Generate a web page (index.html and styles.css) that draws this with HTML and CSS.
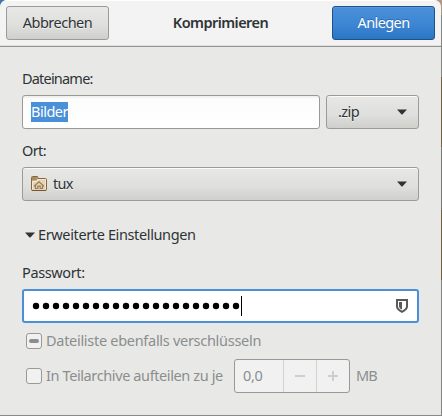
FILE: index.html
```
<!DOCTYPE html>
<html lang="de">
<head>
<meta charset="utf-8">
<title>Komprimieren</title>
<link rel="stylesheet" href="styles.css">
</head>
<body>
<div class="dialog">
  <header class="header">
    <button class="btn action"><span class="t-cancel">Abbrechen</span></button>
    <h1 class="title">Komprimieren</h1>
    <button class="btn action primary"><span class="t-create">Anlegen</span></button>
  </header>
  <main class="content">
    <div class="label name-label"><span class="t-name">Dateiname:</span></div>
    <div class="row name-row">
      <div class="entry"><span class="selection">Bilder</span></div>
      <div class="btn combo"><span class="t-zip">.zip</span>
        <svg class="arrow" width="10" height="6" viewBox="0 0 10 6"><path d="M0 .5h10L5.4 5.5h-.8z"/></svg>
      </div>
    </div>
    <div class="label place-label"><span class="t-place">Ort:</span></div>
    <div class="btn combo place">
      <svg class="folder" width="16" height="16" viewBox="0 0 16 16">
        <path d="M.5 1.5q0-1 1-1H6q1 0 1 1v1h7.500q1 0 1 1v10q0 1-1 1h-13q-1 0-1-1z" fill="#e5d3b7" stroke="#86663e"/>
        <path d="M1 1h5.500v2L5 4.500H1z" fill="#a98b61"/>
        <path d="M1.500 13V5.500H5L7 3.500h7.500V13" fill="none" stroke="#f2e7d4"/>
        <path d="M1 14.500h14" stroke="#755530"/>
        <path d="M3 10.300 8 5.700l5 4.600M4.500 9.500v3h2.300v-2.300h2.400v2.300h2.300v-3" fill="none" stroke="#9c7e57" stroke-width="1.2"/>
      </svg>
      <span class="t-tux">tux</span>
      <svg class="arrow" width="10" height="6" viewBox="0 0 10 6"><path d="M0 .5h10L5.4 5.5h-.8z"/></svg>
    </div>
    <div class="label expander">
      <svg width="10" height="6" viewBox="0 0 10 6"><path d="M0 .5h10L5.4 5.5h-.8z"/></svg>
      <span class="t-exp">Erweiterte Einstellungen</span>
    </div>
    <div class="label pass-label"><span class="t-pass">Passwort:</span></div>
    <div class="entry focus">
      <svg class="dots" width="210" height="8"><defs><pattern id="dot" width="10" height="8" patternUnits="userSpaceOnUse"><circle cx="4" cy="4" r="3.2"/></pattern></defs><rect width="210" height="8" fill="url(#dot)"/></svg>
      <i class="caret"></i>
      <svg class="shield" width="12" height="14" viewBox="0 0 12 14"><path d="M1 1h10v6.500q0 2.800-5 5.300Q1 10.300 1 7.500z" fill="none" stroke="#555a5a" stroke-width="2"/><path d="M3 3h3v7.500Q3 9.500 3 7z" fill="#555a5a"/></svg>
    </div>
    <div class="check-row first">
      <i class="check"><b></b></i><span class="t-list">Dateiliste ebenfalls verschlüsseln</span>
    </div>
    <div class="check-row second">
      <i class="check"></i><span class="t-split">In Teilarchive aufteilen zu je</span>
      <div class="spin">
        <span class="value">0,0</span>
        <span class="step"><svg width="10" height="10"><path d="M0 5h10"/></svg></span>
        <span class="step"><svg width="10" height="10"><path d="M0 5h10M5 0v10"/></svg></span>
      </div>
      <span class="unit">MB</span>
    </div>
  </main>
</div>
</body>
</html>
```
FILE: styles.css
```
* { box-sizing: border-box; }
body {
  margin: 0;
  width: 442px;
  height: 416px;
  overflow: hidden;
  background: linear-gradient(to bottom, #b09a86 0 15px, #858585 15px 77px, #75603f 77px 147px, #777 147px 210px, #75603f 210px 280px, #858585 280px);
  font: 14.5px/20px "Noto Sans", sans-serif;
  color: #2e3436;
}
span, h1 { white-space: nowrap; }
svg { display: block; flex: none; fill: #2e3436; }
.dialog {
  width: 441px;
  height: 415px;
  background: #e8e8e6;
  border-radius: 7px 7px 0 0;
  overflow: hidden;
  box-shadow: 0 1px #8c8a89, -6px -2px 0 2px #3f74b0;
}
.header {
  display: flex;
  align-items: center;
  justify-content: space-between;
  height: 47px;
  padding: 0 6px 1px;
  background: linear-gradient(#fff 0 1px, #f3f3f3 1px 45px, #dededc 45px);
  border-bottom: 1px solid #969691;
}
.title { margin: 0; padding-bottom: 2px; font-size: 14.5px; line-height: 20px; font-weight: 600; letter-spacing: -.55px; }
.btn {
  display: flex;
  align-items: center;
  height: 34px;
  border: 1px solid #9b9b97;
  border-radius: 3px;
  background: linear-gradient(#e8e8e6, #dededc 60%, #cfcfcc);
  box-shadow: inset 0 1px #fafafa;
  color: #2e3436;
  text-shadow: 0 1px #f2f2f1;
  font: inherit;
  padding: 0;
}
.btn span, .label span, .t-list, .t-split, .unit { padding-bottom: 2px; }
.action { width: 103px; justify-content: center; box-shadow: none; }
.primary {
  border-color: #1f5287;
  background: linear-gradient(#4a90d9, #3f87d4 50%, #2a76c6);
  box-shadow: inset 0 1px #5999dc;
  color: #fff;
  text-shadow: 0 -1px #286aae;
}
.content { width: 441px; padding: 22px 22px 0; }
.label { height: 20px; display: flex; align-items: center; }
.row { display: flex; gap: 6px; }
.name-row { margin-top: 6px; }
.entry {
  display: flex;
  align-items: center;
  height: 34px;
  width: 298px;
  padding: 0 8px;
  border: 1px solid #999995;
  border-radius: 3px;
  background: linear-gradient(#ededed 0, #fcfcfc 3px, #fff);
}
.selection { display: block; height: 20px; width: 37px; line-height: 18px; background: #4a90d9; color: #fff; letter-spacing: -.5px; }
.combo { width: 93px; padding: 0 11px 0 11px; }
.combo .arrow { margin-left: auto; }
.place-label { margin-top: 12px; }
.place { width: 397px; margin-top: 6px; padding-left: 8px; }
.folder { margin-right: 6px; }
.expander { margin-top: 24px; padding-left: 3px; gap: 3px; }
.pass-label { margin-top: 18px; }
.focus { width: 397px; margin-top: 6px; border: 2px solid #4a90d9; background: #fff; }
.dots { fill: #000; }
.caret { width: 1px; height: 20px; margin-left: -1px; background: #000; }
.shield { margin-left: auto; margin-right: 1px; }
.check-row { display: flex; align-items: center; padding-left: 4px; color: #8b8e8f; }
.first { height: 20px; margin-top: 8px; }
.second { height: 34px; margin-top: 8px; }
.check {
  display: flex;
  align-items: center;
  justify-content: center;
  width: 16px;
  height: 16px;
  margin-right: 4px;
  border: 1px solid #999995;
  border-radius: 3px;
  background: #f1f1f1;
}
.check b { width: 10px; height: 4px; border-radius: 2px; background: #8b8e8f; }
.spin { display: flex; width: 116px; height: 34px; margin-left: 10px; border: 1px solid #999995; border-radius: 3px; background: #f1f1f1; }
.value { width: 48px; padding: 5px 0 0 8px; letter-spacing: -.4px; }
.step { flex: 1; display: flex; align-items: center; justify-content: center; border-left: 1px solid #d4d4d2; }
.step svg { fill: none; stroke: #cdcfcd; stroke-width: 2; }
.unit { margin-left: 6px; letter-spacing: -1px; }
.t-cancel { letter-spacing: -.5px; }
.t-create { letter-spacing: -.6px; }
.t-name { letter-spacing: -.8px; }
.t-place, .t-zip { letter-spacing: -.6px; }
.t-tux { letter-spacing: -.7px; }
.t-exp, .t-pass { letter-spacing: -.37px; }
.t-list { letter-spacing: -.29px; }
.t-split { width: 178px; letter-spacing: -.39px; }
```
